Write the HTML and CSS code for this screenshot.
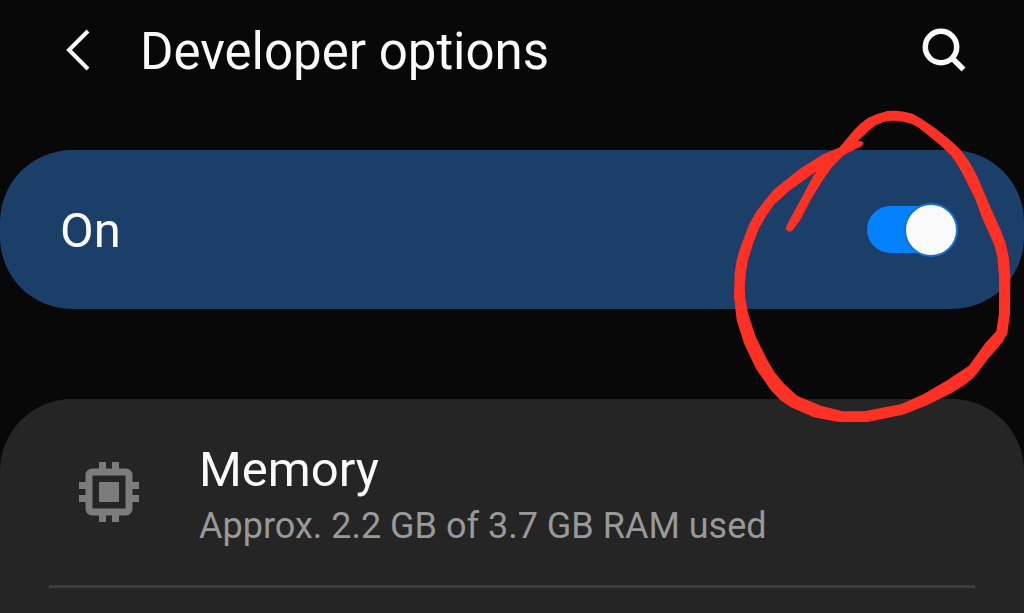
FILE: index.html
```html
<!DOCTYPE html>
<html lang="en">
<head>
<meta charset="utf-8">
<meta name="viewport" content="width=device-width, initial-scale=1">
<title>Developer options</title>
<link rel="stylesheet" href="styles.css">
</head>
<body>
<div class="screen">
  <header class="app-bar">
    <button class="icon-button" type="button" aria-label="Back">
      <svg class="back-icon" viewBox="0 0 24 42" aria-hidden="true"><path d="M22 2 3 21l19 19"/></svg>
    </button>
    <h1 class="title">Developer options</h1>
    <button class="icon-button" type="button" aria-label="Search">
      <svg class="search-icon" viewBox="0 0 46 46" aria-hidden="true"><circle cx="20" cy="20" r="15.700"/><path d="m31 31 11.500 11.500"/></svg>
    </button>
  </header>
  <main class="content">
    <div class="master">
      <label class="item-title" for="developer-switch">On</label>
      <input class="switch" id="developer-switch" type="checkbox" role="switch" checked>
    </div>
    <section class="card">
      <div class="row">
        <svg class="chip-icon" viewBox="0 0 60 60" aria-hidden="true">
          <path fill-rule="evenodd" d="M13 6.500h34a6.500 6.500 0 0 1 6.500 6.500v34a6.500 6.500 0 0 1-6.500 6.500H13A6.500 6.500 0 0 1 6.500 47V13A6.500 6.500 0 0 1 13 6.500zM13.500 13.500v33h33v-33z"/>
          <path d="M20 20h20v20H20zM20 0h7v8h-7zM33 0h7v8h-7zM20 52h7v8h-7zM33 52h7v8h-7zM0 20h8v7H0zM0 33h8v7H0zM52 20h8v7h-8zM52 33h8v7h-8z"/>
        </svg>
        <div class="row-text">
          <h2 class="item-title">Memory</h2>
          <p class="summary">Approx. 2.2 GB of 3.7 GB RAM used</p>
        </div>
      </div>
      <hr class="divider">
    </section>
  </main>
  <svg class="marker" viewBox="0 0 900 990" aria-hidden="true">
    <path d="M416 127 402 124 345 145 300 164 230 207 152 269 122 305 96 340 76 377 52 440 40 480 34 520 32 590 40 660 62 730 97 804 142 869 172 900 202 920 270 950 345 964 430 964 485 953 540 941 610 913 680 878 725 850 750 828 790 776 833 726 848 700 856 640 857 530 853 475 843 430 828 390 803 335 758 230 735 188 708 151 675 120 640 92 590 57 565 43 540 37 515 34 490 35 462 43 435 54 412 71 392 91 345 147 303 187 271 227 237 290 189 378 188 388 194 393 203 392 230 354 258 299 298 234 325 197 353 169 408 114 430 93 455 73 477 64 500 60 520 60 540 63 562 69 582 79 622 111 652 136 682 164 700 190 717 219 757 299 775 350 797 399 813 435 822 470 827 530 827 640 819 694 787 729 737 798 672 842 600 884 530 915 420 936 355 936 290 919 218 889 178 852 150 818 128 781 93 711 70 640 62 595 60 560 64 515 70 480 86 428 103 384 125 346 148 313 198 268 268 218 310 193 353 166 413 136Z"/>
  </svg>
</div>
</body>
</html>
```
FILE: styles.css
```css
*,
*::before {
  box-sizing: border-box;
}

body {
  margin: 0;
  background: #080808;
  color: #fafafa;
  font-family: Roboto, "Liberation Sans", sans-serif;
}

.screen {
  position: relative;
  min-height: 100vh;
  display: flex;
  flex-direction: column;
  overflow: hidden;
}

.app-bar {
  display: flex;
  align-items: center;
  padding: 20px 54px 20px 52px;
}

.icon-button {
  display: grid;
  place-items: center;
  width: 52px;
  height: 60px;
  padding: 0 0 2px;
  border: 0;
  background: none;
  color: inherit;
}

.back-icon,
.search-icon {
  fill: none;
  stroke: currentColor;
}

.back-icon {
  width: 24px;
  height: 42px;
  stroke-width: 4;
}

.search-icon {
  width: 46px;
  height: 46px;
  stroke-width: 5.500;
}

.title {
  flex: 1;
  margin: 0;
  padding: 2px 0 0 36px;
  font-size: 51px;
  font-weight: 400;
  line-height: 60px;
}

.content {
  flex: 1;
  display: flex;
  flex-direction: column;
  gap: 90px;
  padding-top: 48px;
}

.master {
  display: flex;
  align-items: center;
  justify-content: space-between;
  padding: 48px 66px 48px 60px;
  border-radius: 72px;
  background: #1c3f6a;
}

.item-title {
  margin: 0;
  padding-top: 3px;
  font-size: 49px;
  font-weight: 400;
  line-height: 60px;
}

.switch {
  appearance: none;
  display: flex;
  align-items: center;
  justify-content: flex-end;
  width: 91px;
  height: 47px;
  margin: 0;
  border-radius: 24px;
  background: #0381fe;
}

.switch::before {
  content: "";
  flex: none;
  width: 54px;
  height: 54px;
  border: 2px solid #1672cc;
  border-radius: 50%;
  background: #fafafa;
}

.switch:not(:checked) {
  justify-content: flex-start;
  background: #777777;
}

.card {
  flex: 1;
  padding: 38px 49px 26px;
  border-radius: 72px 72px 0 0;
  background: #252525;
}

.row {
  display: flex;
  align-items: flex-start;
  gap: 60px;
  padding: 0 30px 32px;
}

.chip-icon {
  flex: none;
  width: 60px;
  height: 60px;
  margin-top: 25px;
  fill: #7c7c7c;
}

.summary {
  margin: 0;
  color: #999999;
  font-size: 36px;
  line-height: 53px;
}

.divider {
  height: 3px;
  margin: 0;
  border: 0;
  background: #3d3d3d;
}

.marker {
  position: absolute;
  top: 100px;
  right: 0;
  width: 300px;
  height: 330px;
  fill: #ff3124;
  stroke: #ff3124;
  stroke-width: 4;
  stroke-linejoin: round;
  pointer-events: none;
}
```
